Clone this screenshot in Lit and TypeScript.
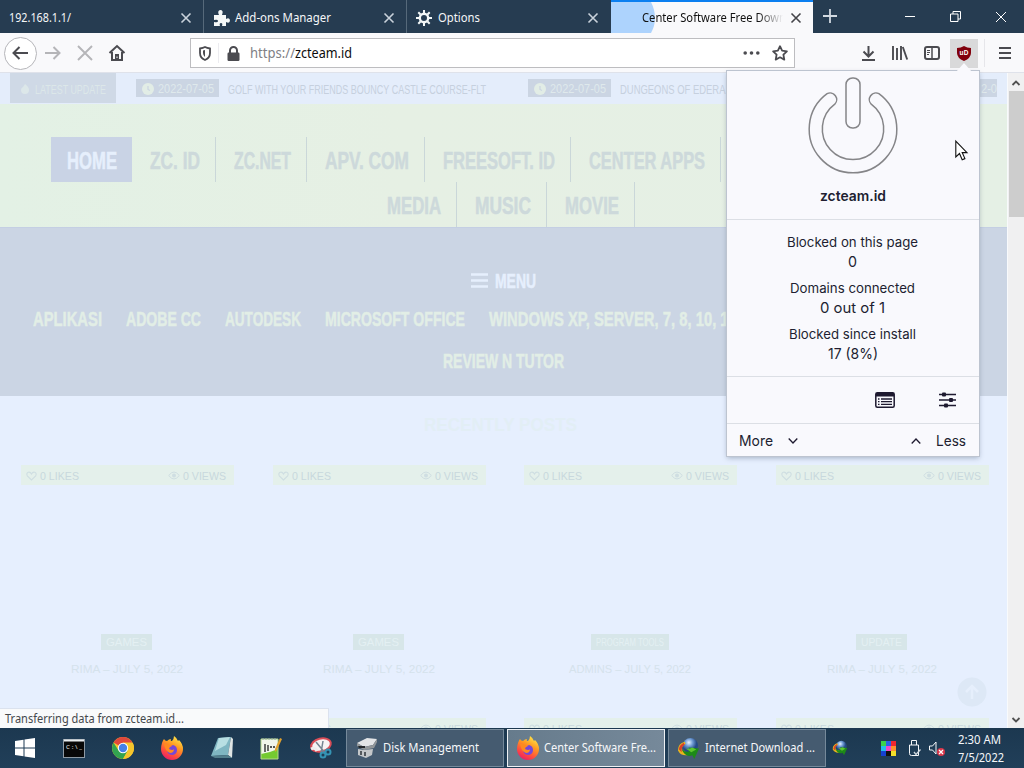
import { LitElement, html, svg, css } from "lit";
import { customElement } from "lit/decorators.js";

// One line of text, fitted to a known width; capitals are centred in the line box.
const t = (s: string, w: number, size: number, cls = "", h = 20) => html`<svg class="t ${cls}" width=${w} height=${h}><text x="0" y=${h / 2 + size * 0.36} font-size=${size} textLength=${w} lengthAdjust="spacingAndGlyphs">${s}</text></svg>`;

const icon = (w: number, h: number, body: unknown, cls = "") => html`<svg class="i ${cls}" width=${w} height=${h} viewBox="0 0 ${w} ${h}">${body}</svg>`;

const closeIcon = (cls = "") => icon(12, 12, svg`<path d="M1.5 1.5l9 9M10.5 1.5l-9 9" fill="none" stroke="currentColor" stroke-width="1.6"/>`, cls);
const clockIcon = icon(12, 12, svg`<circle cx="6" cy="6" r="6" fill="#e2ede6"/><path d="M6 3v3.5l2 1" fill="none" stroke="#cbd5e2" stroke-width="1.2"/>`);
const firefox = icon(24, 24, svg`<defs><linearGradient id="ff" x1=".8" y1="0" x2=".3" y2="1"><stop offset="0" stop-color="#fff04d"/><stop offset=".4" stop-color="#ff9a22"/><stop offset=".75" stop-color="#ff4a3f"/><stop offset="1" stop-color="#e81e68"/></linearGradient></defs><path d="M2 7q1-3 2-4 1 2 3 2 2-2 4-2-1 2 1 2 2-2 2-5 3 2 4 5l1-1q4 4 4 9A11 11 0 0 1 1 13q0-3 1-6z" fill="url(#ff)"/><path d="M7 10q3 1 6-1 4 1 4 5 0 4-4 5-5 0-6-4z" fill="#7548d8"/><path d="M4 8q3-1 5 1l3 1q-3 1-3 3 4 2 5 0 0 4-4 4-5-2-6-9z" fill="#ff8a20"/>`);
const idm = (s: number) => html`<svg class="i" width=${s} height=${s} viewBox="0 0 24 24"><defs><radialGradient id="gl" cx=".4" cy=".3"><stop offset="0" stop-color="#e8f2ff"/><stop offset=".5" stop-color="#6f9bd4"/><stop offset="1" stop-color="#254a86"/></radialGradient></defs><circle cx="14" cy="9" r="8" fill="url(#gl)"/><path d="M8 5q-7 2-7 9 3 6 10 5l1-3q-7 0-7-5 1-3 4-4z" fill="#e8b51c"/><path d="M7 6q-5 3-5 7l3 3q-1-6 3-8z" fill="#d9402a"/><path d="M5 13q5 4 9 1l-2-3 11 1-5 11-2-4q-7 3-11-6z" fill="#1d8a18"/><path d="M9 12q4 1 7-1l4 2-5 3z" fill="#5cc52c"/></svg>`;
const heart = icon(11, 10, svg`<path d="M5.5 9L1.3 4.8Q0 2.3 2.2 1.2 4.4.6 5.5 3 6.6.6 8.8 1.2 11 2.3 9.7 4.8Z" fill="none" stroke="#cfdee2" stroke-width="1.1"/>`);
const eye = icon(12, 9, svg`<path d="M.7 4.5Q6-2.5 11.3 4.5 6 11.5 .7 4.5Z" fill="none" stroke="#cfdee2"/><circle cx="6" cy="4.5" r="2" fill="#cfdee2"/>`);

@customElement("browser-tabs")
class BrowserTabs extends LitElement {
  static styles = css`
    :host { display: flex; height: 33px; background: #263c51; color: #f2f5f8; }
    svg { display: block; flex: none; overflow: visible; }
    text { font-family: "Noto Sans", sans-serif; fill: #f4f6f8; }
    .tab { display: flex; align-items: center; box-sizing: border-box; width: 203.5px; padding: 2px 11px 0 9px; border-right: 1px solid #56697a; }
    .tab .x { margin-left: auto; color: #c9d2db; }
    .lead { margin: 0 5px 0 0; }
    .gear { margin-right: 6px; }
    .plain { border-color: transparent; }
    .active { width: 202.5px; border: 0; border-top: 2px solid #0b7ff0; padding: 0 11px 0 0; background: #f9f9fb; color: #3c3c40; position: relative; }
    .active text { fill: #111; }
    .burst { position: absolute; left: 0; top: 0; }
    .title { margin-left: 31px; width: 141px; overflow: hidden; position: relative; -webkit-mask-image: linear-gradient(90deg, #000 82%, transparent); mask-image: linear-gradient(90deg, #000 82%, transparent); }
    .active .x { color: #444449; }
    .plus { margin: 9px 0 0 10px; }
    .win { display: flex; margin-left: auto; align-items: center; gap: 34px; padding-right: 17px; }
  `;
  render() {
    return html`
      <div class="tab">${t("192.168.1.1/", 62, 12)}${closeIcon("x")}</div>
      <div class="tab">
        ${icon(17, 17, svg`<path d="M1 6h5q-2-4 1-5 4 0 2 5h4v4q3-2 4 1 0 4-4 2v4H9q1-3-1-3t-1 3H1v-4q4 1 4-1T1 11z" fill="#f4f8f8"/>`, "lead")}
        ${t("Add-ons Manager", 96, 12)}${closeIcon("x")}</div>
      <div class="tab plain">
        ${icon(16, 16, svg`<g stroke="#f4f8f8" fill="none"><circle cx="8" cy="8" r="4.200" stroke-width="2.400"/><path d="M8 0v3M8 13v3M0 8h3M13 8h3M2.300 2.300l2.200 2.200M11.500 11.500l2.200 2.200M2.300 13.700l2.200-2.200M11.500 4.500l2.200-2.200" stroke-width="2"/></g>`, "gear")}
        ${t("Options", 42, 12)}${closeIcon("x")}</div>
      <div class="tab active">
        ${icon(44, 31, svg`<path d="M0 0h40q4 8 4 16 0 8-4 15H0z" fill="#add3fd"/>`, "burst")}
        <div class="title">${t("Center Software Free Down", 144, 12)}</div>${closeIcon("x")}</div>
      ${icon(14, 14, svg`<path d="M7 0v14M0 7h14" stroke="#d2d9e0" stroke-width="1.800"/>`, "plus")}
      <div class="win">
        ${icon(12, 12, svg`<path d="M1 5.500h10" stroke="#fff"/>`)}
        ${icon(11, 11, svg`<path d="M.5 3h7.500v7.500H.5zM3 3V.5h7.500V8H8" fill="none" stroke="#fff"/>`)}
        ${icon(12, 12, svg`<path d="M1 1l10 10M11 1L1 11" stroke="#fff"/>`)}
      </div>`;
  }
}

@customElement("nav-toolbar")
class NavToolbar extends LitElement {
  static styles = css`
    :host { display: flex; align-items: center; box-sizing: border-box; height: 40px; background: #f9f9fb; color: #4b4b50; padding: 1px 0 0 3.5px; border-bottom: 1px solid #dfe2ea; }
    svg { display: block; flex: none; overflow: visible; }
    text { font-family: "Noto Sans", sans-serif; fill: #0c0c0d; }
    .grey text { fill: #808085; }
    .cell { width: 32px; height: 33px; display: grid; place-items: center; flex: none; }
    .back { box-sizing: border-box; border: 1px solid #b6b6ba; border-radius: 50%; background: #fff; width: 33px; }
    .dim { color: #b5b5b8; }
    .url { display: flex; align-items: center; box-sizing: border-box; margin: 0 57px 0 57.5px; width: 605px; height: 30px; background: #fff; border: 1px solid #bdbdc0; padding: 0 6px 0 8px; flex: none; }
    .shield { padding-right: 7px; margin-right: 8px; height: 20px; border-right: 1px solid #ececf0; }
    .lock { margin-right: 10px; }
    .dots { margin-left: auto; margin-right: 12px; }
    .ub { width: 28px; height: 29px; margin: 1px 2px 0; background: #d9d9da; }
    .ub text { fill: #fff; font-weight: 700; font-family: "Liberation Sans", sans-serif; }
    .menu { margin-left: 4px; width: 39px; display: flex; align-items: center; }
    .menu svg { margin-left: 14px; }
    .rule { width: 1px; height: 28px; background: #e6e6ea; }
  `;
  render() {
    return html`
      <div class="cell back">${icon(16, 14, svg`<path d="M16 7H1.500M7.500 1l-6 6 6 6" fill="none" stroke="currentColor" stroke-width="2"/>`)}</div>
      <div class="cell dim">${icon(16, 14, svg`<path d="M0 7h14.500M8.500 1l6 6-6 6" fill="none" stroke="currentColor" stroke-width="2"/>`)}</div>
      <div class="cell dim">${icon(14, 14, svg`<path d="M0 0l14 14M14 0L0 14" stroke="currentColor" stroke-width="1.900"/>`)}</div>
      <div class="cell">${icon(16, 16, svg`<path d="M.5 8L8 1l7.500 7M3 7v8h10V7" fill="none" stroke="currentColor" stroke-width="2"/><path d="M6 15V9h4v6z" fill="currentColor"/><path d="M8 11.500v1.500" stroke="#fff"/>`)}</div>
      <div class="url">
        ${icon(12, 15, svg`<path d="M1 2.500Q4 2 6 1q2 1 5 1.500V7q0 5-5 7-5-2-5-7z" fill="none" stroke="currentColor" stroke-width="1.800"/><path d="M6 4v7Q4 9.500 4 7V4.500z" fill="currentColor"/>`)}
        <span class="shield"></span>
        ${icon(13, 15, svg`<path d="M3 7V4.500a3.500 3.500 0 0 1 7 0V7" fill="none" stroke="currentColor" stroke-width="2"/><rect x=".5" y="6.500" width="12" height="8.500" rx="1.200" fill="currentColor"/>`, "lock")}
        ${t("https://", 45, 13.5, "grey")}${t("zcteam.id", 57, 13.5)}
        ${icon(17, 4, svg`<g fill="currentColor"><circle cx="2.200" cy="2" r="1.800"/><circle cx="8.500" cy="2" r="1.800"/><circle cx="14.800" cy="2" r="1.800"/></g>`, "dots")}
        ${icon(16, 16, svg`<path d="M8 1.200l2.100 4.400 4.800.7-3.500 3.400.9 4.900L8 12.300l-4.300 2.300.9-4.900L1.100 6.300l4.800-.7z" fill="none" stroke="currentColor" stroke-width="1.800" stroke-linejoin="round"/>`)}
      </div>
      <div class="cell">${icon(13, 16, svg`<path d="M6.500 1v10M1.500 6.500l5 5 5-5M0 15h13" fill="none" stroke="currentColor" stroke-width="2"/>`)}</div>
      <div class="cell">${icon(16, 14, svg`<path d="M1 0v14M5 2v12M9 0v14M10.800 1l4.400 12.500" fill="none" stroke="currentColor" stroke-width="1.900"/>`)}</div>
      <div class="cell">${icon(16, 14, svg`<rect x="1" y="1" width="14" height="12" rx="2" fill="none" stroke="currentColor" stroke-width="2"/><path d="M8 1v12" stroke="currentColor" stroke-width="1.500"/><path d="M3 4.500h3M3 6.500h3M3 8.500h2" stroke="currentColor"/>`)}</div>
      <div class="cell ub">${icon(14, 15, svg`<path d="M7 0q3 2 7 2v5q0 5-7 8-7-3-7-8V2q4 0 7-2z" fill="#80000c"/><text x="2.500" y="9" font-size="6.500" textLength="9">uD</text>`)}</div>
      <div class="menu"><span class="rule"></span>${icon(12, 12, svg`<path d="M0 1h12M0 6h12M0 11h12" stroke="currentColor" stroke-width="1.900"/>`)}</div>`;
  }
}

@customElement("site-page")
class SitePage extends LitElement {
  static styles = css`
    :host { display: block; flex: 1; min-width: 0; height: 655px; overflow: hidden; background: #e6effe; position: relative; }
    svg { display: block; flex: none; overflow: visible; }
    text { font-family: "Liberation Sans", sans-serif; font-weight: 700; }
    .thin text, .light text, .date text, .tag text { font-weight: 400; }
    .ticker { display: flex; height: 31px; background: #e4edfb; padding-left: 10px; align-items: center; }
    .latest { display: flex; box-sizing: border-box; width: 106px; height: 30px; padding: 2px 0 0 10px; gap: 5px; align-items: center; background: #cfd9e6; margin: -1px 20px 0 0; flex: none; }
    .latest text { fill: #dce7e9; font-weight: 400; }
    .stamp { display: flex; box-sizing: border-box; width: 83px; height: 18px; padding: 1px 0 0 6px; gap: 4px; align-items: center; background: #cbd5e3; margin: -1px 9px 0 0; flex: none; }
    .stamp text { fill: #dfe9ec; font-weight: 400; }
    .thin { margin-right: 42px; }
    .thin text { fill: #c6d0de; }
    .last { width: 17px; margin-left: 201px; overflow: hidden; padding-left: 1px; }
    .nav { background: linear-gradient(90deg, #e3f1e5, #e6f0e4 40%, #e5f0e5); height: 123px; box-sizing: border-box; padding-top: 33px; }
    .nav text { stroke-width: 0.500; stroke: #cdd9db; }
    .row { display: flex; height: 45px; padding-left: 51px; }
    .second { padding-left: 369px; }
    .link { display: flex; align-items: center; padding: 2px 15px 0 18px; border-right: 1px solid #cad7d9; }
    .link text { fill: #cdd9db; }
    .home { background: #c9d3e5; padding: 2px 15px 0 16px; border: 0; }
    .home text { fill: #e6effc; stroke: #e6effc; }
    .menu { height: 169px; background: #cbd5e4; box-sizing: border-box; padding-top: 42px; border-top: 1px solid #c4cfe3; }
    .menu text { stroke-width: 0.500; stroke: #e2eee6; }
    .toggle { display: flex; align-items: center; gap: 7px; padding-left: 471px; height: 21px; }
    .toggle text { fill: #e6effd; stroke: #e6effd; }
    .cats { display: flex; gap: 24px; padding-left: 33px; height: 42px; align-items: center; margin-top: 6.5px; }
    .cats text, .review text { fill: #e2eee6; }
    .review { padding-left: 443px; height: 42px; display: flex; align-items: center; }
    .heading { height: 68.5px; box-sizing: border-box; padding: 19px 0 0 424px; }
    .heading text { fill: #e2eef5; }
    .grid { display: grid; grid-template-columns: repeat(4, 251.7px); padding-left: 21px; }
    .card { height: 253px; }
    .bar { display: flex; align-items: center; width: 213px; height: 20px; box-sizing: border-box; background: #e4f0eb; padding: 2px 8px 0 5px; gap: 3px; }
    .bar .push { margin-left: auto; }
    .light text { fill: #c8d8dd; }
    .tagline { display: flex; justify-content: center; width: 211px; margin-top: 149px; }
    .tag { height: 16px; background: #d7e6e9; display: grid; place-items: center; padding: 0 5px; }
    .tag text { fill: #e4f0f3; }
    .date { display: flex; justify-content: center; width: 212px; margin-top: 10px; }
    .date text { fill: #d5e2ec; }
    .top { position: absolute; left: 957px; top: 604px; }
  `;
  render() {
    const card = (tag: string, tw: number, date: string, dw: number) => html`<div class="card">
      <div class="bar">${heart}${t("0 LIKES", 39, 11, "light", 14)}<span class="push"></span>${eye}${t("0 VIEWS", 43, 11, "light", 14)}</div>
      <div class="tagline"><div class="tag">${t(tag, tw, 11, "", 14)}</div></div>
      <div class="date">${t(date, dw, 11, "", 18)}</div></div>`;
    const link = (s: string, w: number) => html`<div class="link">${t(s, w, 23)}</div>`;
    const cards = [["GAMES", 41, "RIMA – JULY 5, 2022", 112], ["GAMES", 41, "RIMA – JULY 5, 2022", 112], ["PROGRAM TOOLS", 68, "ADMINS – JULY 5, 2022", 122], ["UPDATE", 41, "RIMA – JULY 5, 2022", 110]] as [string, number, string, number][];
    return html`
      <div class="ticker">
        <div class="latest">${icon(10, 12, svg`<path d="M5 1q4 3 4 6 0 4-4 4T1 7q0-2 2-3z" fill="#dce7e9"/>`)}${t("LATEST UPDATE", 71, 13.5)}</div>
        <div class="stamp">${clockIcon}${t("2022-07-05", 56, 12)}</div>
        ${t("GOLF WITH YOUR FRIENDS BOUNCY CASTLE COURSE-FLT", 258, 13.5, "thin")}
        <div class="stamp">${clockIcon}${t("2022-07-05", 56, 12)}</div>
        ${t("DUNGEONS OF EDERA (V", 117, 13.5, "thin")}
        <div class="stamp last">${t("2-0", 16, 12)}</div>
      </div>
      <div class="nav">
        <div class="row"><div class="link home">${t("HOME", 50, 23)}</div>${link("ZC. ID", 50)}${link("ZC.NET", 57)}${link("APV. COM", 84)}${link("FREESOFT. ID", 112)}${link("CENTER APPS", 116)}</div>
        <div class="row second">${link("MEDIA", 54)}${link("MUSIC", 56)}${link("MOVIE", 54)}</div>
      </div>
      <div class="menu">
        <div class="toggle">${icon(17, 15, svg`<path d="M0 1.500h17M0 7.500h17M0 13.500h17" stroke="#e6effd" stroke-width="2.500"/>`)}${t("MENU", 41, 20.5)}</div>
        <div class="cats">${t("APLIKASI", 69, 20.5)}${t("ADOBE CC", 75, 20.5)}${t("AUTODESK", 76, 20.5)}${t("MICROSOFT OFFICE", 140, 20.5)}${t("WINDOWS XP, SERVER, 7, 8, 10, 11", 247, 20.5)}</div>
        <div class="review">${t("REVIEW N TUTOR", 121, 20.5)}</div>
      </div>
      <div class="heading">${t("RECENTLY POSTS", 153, 18)}</div>
      <div class="grid">${cards.map((c) => card(...c))}${cards.map((c) => card(...c))}</div>
      ${icon(30, 30, svg`<circle cx="15" cy="15" r="14.500" fill="#dde8f6"/><path d="M15 22V9M9 15l6-6 6 6" fill="none" stroke="#e6effc" stroke-width="2.500"/>`, "top")}`;
  }
}

@customElement("blocker-popup")
class BlockerPopup extends LitElement {
  static styles = css`
    :host { display: block; box-sizing: border-box; width: 252px; height: 385px; background: #f9f9fd; box-shadow: 0 0 0 1px #bdc4d0, 0 2px 5px rgba(40, 60, 90, 0.35); color: #1e1a30; }
    svg { display: block; flex: none; overflow: visible; }
    text { font-family: Inter, sans-serif; fill: #211e31; }
    .head { height: 148px; display: flex; flex-direction: column; align-items: center; box-sizing: border-box; padding-top: 6px; gap: 12px; }
    .bold text { font-weight: 600; }
    .stats { height: 157px; box-sizing: border-box; border-top: 1px solid #dcdfe5; padding: 13px 1px 0 0; display: flex; flex-direction: column; align-items: center; }
    .value { margin-bottom: 8px; }
    .tools { height: 47px; box-sizing: border-box; border-top: 1px solid #dcdfe5; display: flex; align-items: center; justify-content: flex-end; gap: 44px; padding-right: 23.5px; }
    .foot { height: 33px; box-sizing: border-box; border-top: 1px solid #dcdfe5; display: flex; align-items: center; padding: 1px 13px 0 12px; gap: 15px; }
    .up { margin-left: auto; }
  `;
  render() {
    const stat = (a: string, aw: number, b: string, bw: number) => html`${t(a, aw, 13, "", 19)}${t(b, bw, 14.5, "value", 19)}`;
    return html`
      <div class="head">
        <svg width="90" height="97" viewBox="-45 -52 90 97"><g fill="none" stroke="#858588" stroke-width="1.500"><path d="M-25.900-35.300A43.800 43.800 0 1 0 25.900-35.300A6.600 6.600 0 0 0 18.200-24.800A30.700 30.700 0 1 1-18.200-24.800A6.600 6.600 0 0 0-25.900-35.300Z"/><rect x="-7" y="-51" width="14" height="50" rx="6.500"/></g></svg>
        ${t("zcteam.id", 66, 14, "bold")}
      </div>
      <div class="stats">${stat("Blocked on this page", 131, "0", 9)}${stat("Domains connected", 125, "0 out of 1", 65)}${stat("Blocked since install", 127, "17 (8%)", 50)}</div>
      <div class="tools">
        ${icon(20, 16, svg`<rect x=".8" y=".8" width="18.400" height="14.400" rx="1.500" fill="none" stroke="currentColor" stroke-width="1.500"/><path d="M1 1h18v3.500H1z" fill="currentColor"/><path d="M3 7h1.500M3 9.700h1.500M3 12.400h1.500M6 7h11M6 9.700h11M6 12.400h11" stroke="currentColor" stroke-width="1.300"/>`)}
        ${icon(17, 16, svg`<path d="M0 2.500h17M0 8h17M0 13.500h17" stroke="currentColor" stroke-width="1.300"/><rect x="3" y=".5" width="4" height="4" rx="1" fill="currentColor"/><rect x="10" y="6" width="4" height="4" rx="1" fill="currentColor"/><rect x="5" y="11.500" width="4" height="4" rx="1" fill="currentColor"/>`)}
      </div>
      <div class="foot">${t("More", 34, 14.5)}${icon(10, 6, svg`<path d="M.7.500L5 5 9.300.500" fill="none" stroke="currentColor" stroke-width="1.300"/>`)}${icon(10, 6, svg`<path d="M.7 5.500L5 1l4.300 4.500" fill="none" stroke="currentColor" stroke-width="1.300"/>`, "up")}${t("Less", 30, 14.5)}</div>`;
  }
}

@customElement("task-bar")
class TaskBar extends LitElement {
  static styles = css`
    :host { display: flex; height: 40px; background: linear-gradient(#1c3850, #213f59); }
    svg { display: block; flex: none; overflow: visible; }
    text { font-family: "Noto Sans", sans-serif; fill: #f5f7f9; }
    .pins { display: flex; width: 346px; }
    .pin { width: 49.2px; display: grid; place-items: center; }
    .apps { display: flex; gap: 3px; padding-top: 1px; }
    .app { display: flex; align-items: center; gap: 5px; box-sizing: border-box; width: 158px; height: 38px; padding-left: 8px; background: #455b70; border: 1px solid #75899a; }
    .on { background: linear-gradient(90deg, #667b8c, #76899a); border-color: #eef1f4; gap: 4px; }
    .tray { display: flex; align-items: center; margin-left: 6px; }
    .swatch { margin: 0 12px 0 33px; }
    .usb { margin-right: 8px; }
    .clock { display: flex; flex-direction: column; margin: 1px 0 0 13px; }
  `;
  render() {
    return html`
      <div class="pins">
        <div class="pin">${icon(20, 20, svg`<path d="M0 3l8.500-1.200V9.500H0zM9.500 1.600L20 0v9.500H9.500zM0 10.500h8.500v7.700L0 17zM9.500 10.500H20V20L9.500 18.500z" fill="#fff"/>`)}</div>
        <div class="pin">${icon(22, 19, svg`<rect x=".5" y=".5" width="21" height="18" fill="#080808" stroke="#8e9aa4"/><path d="M1 1.500h20" stroke="#e8ecef" stroke-width="2"/><text x="3" y="9.500" font-size="6" textLength="16">C:\\_</text>`)}</div>
        <div class="pin">${icon(22, 22, svg`<circle cx="11" cy="11" r="11" fill="#f5c52c"/><path d="M11 11L1.500 5.500A11 11 0 0 1 20.500 5.500H11z" fill="#e0483c"/><path d="M1.500 5.500A11 11 0 0 0 11 22l5-8.500H6.500z" fill="#32a350"/><path d="M11 6h9.800a11 11 0 0 1-9.800 16l4.800-8.500z" fill="#f5c52c"/><circle cx="11" cy="11" r="5.200" fill="#fff"/><circle cx="11" cy="11" r="4.200" fill="#4480e8"/>`)}</div>
        <div class="pin">${firefox}</div>
        <div class="pin">${icon(23, 22, svg`<path d="M8 1l13-1-3 18-17 1z" fill="#7fb6c2"/><path d="M9 1l11-1-4 8-11 6z" fill="#b8dfe3"/><path d="M21 0l2 2-1 19-4-3z" fill="#dfe5e4"/><path d="M1 19l17-1 4 3H5z" fill="#527e8c"/>`)}</div>
        <div class="pin">${icon(22, 23, svg`<path d="M1 2h17v20H1z" fill="#f1f5ea"/><path d="M1 17q8-1 17-5v10H1z" fill="#74ca30"/><path d="M1 2h17v20H1z" fill="none" stroke="#b5d98a"/><path d="M3 1v2M6 1v2M9 1v2M12 1v2M15 1v2" stroke="#9aa"/><path d="M5 7v8M8 8v6M10 10h2M13 10h2" stroke="#222" stroke-width="1.300"/><path d="M20 1l2 1-5 11-2 2V12z" fill="#e1a02d"/>`)}</div>
        <div class="pin">${icon(24, 22, svg`<ellipse cx="13" cy="8" rx="10" ry="6.500" transform="rotate(-14 13 8)" fill="#f6f3f4" stroke="#db4d57" stroke-width="2"/><path d="M8 5l10 12M15 4l-2 12" stroke="#758592" stroke-width="1.500"/><path d="M3 12q4-2 6 2" fill="none" stroke="#eee" stroke-width="3"/><circle cx="15" cy="18" r="2.500" fill="none" stroke="#3594b4" stroke-width="2"/><circle cx="20" cy="15" r="2.500" fill="none" stroke="#3594b4" stroke-width="2"/>`)}</div>
      </div>
      <div class="apps">
        <div class="app">${icon(23, 22, svg`<path d="M2 6l10-5 10 1-4 6-9 2z" fill="#e3e5e7"/><path d="M2 6l7 4 9-2 4-6v3l-3 6-10 2-7-4z" fill="#92979a"/><path d="M3 12l6 1 9-1-1 6-6 3-8-3z" fill="#c4c7c9"/><path d="M3 9h7v2H4z" fill="#24282b"/><path d="M6 14v4M10 15v4" stroke="#54595d" stroke-width="2"/>`)}${t("Disk Management", 96, 12)}</div>
        <div class="app on">${firefox}${t("Center Software Fre...", 112, 12)}</div>
        <div class="app">${idm(23)}${t("Internet Download ...", 110, 12)}</div>
      </div>
      <div class="tray">
        ${idm(16)}
        ${icon(15, 15, svg`<path d="M0 0h5v5H0z" fill="#3bd24c"/><path d="M5 0h5v5H5z" fill="#2862e8"/><path d="M10 0h5v5h-5z" fill="#f02730"/><path d="M0 5h5v5H0z" fill="#20bdf0"/><path d="M5 5h5v5H5z" fill="#f046ca"/><path d="M10 5h5v5h-5z" fill="#ff922d"/><path d="M0 10h5v5H0z" fill="#1541d2"/><path d="M5 10h5v5H5z" fill="#111"/><path d="M10 10h5v5h-5z" fill="#f4df2a"/>`, "swatch")}
        ${icon(13, 16, svg`<path d="M3.500 5V.500h5V5M1.500 5h9v10.500h-7q-2 0-2-2zM5 2.500h.1M7 2.500h.1" fill="none" stroke="#f4f6f8"/><path d="M6 12l2 2.500 4.500-5" fill="none" stroke="#cfd8df" stroke-width="1.300"/>`, "usb")}
        ${icon(16, 15, svg`<path d="M.5 5h3l3.500-4v12l-3.500-4h-3z" fill="none" stroke="#f4f6f8"/><circle cx="12" cy="11" r="4" fill="#d9364a"/><path d="M10 9l4 4M14 9l-4 4" stroke="#fff" stroke-width="1.200"/>`)}
        <div class="clock">${t("2:30 AM", 43, 12, "", 18)}${t("7/5/2022", 46, 12, "", 18)}</div>
      </div>`;
  }
}

@customElement("app-root")
class AppRoot extends LitElement {
  static styles = css`
    :host { display: block; width: 1024px; height: 768px; overflow: hidden; position: relative; }
    svg { display: block; overflow: visible; }
    text { font-family: "Noto Sans", sans-serif; fill: #45484c; }
    .view { display: flex; height: 655px; }
    .scroll { width: 16px; border-left: 1px solid #f8fafc; background: #f0f0f1; display: flex; flex-direction: column; align-items: center; color: #505050; box-sizing: content-box; }
    .up { margin: 7px 0 5px; }
    .thumb { width: 15px; height: 126px; background: #cdcdcd; }
    .down { margin: auto 0 5px; }
    .status { position: absolute; left: 0; top: 708px; width: 329px; height: 20px; box-sizing: border-box; background: #f9fafb; border: 1px solid #dbe2ee; border-width: 1px 1px 0 0; padding-left: 4.5px; }
    .popup { position: absolute; left: 727px; top: 71px; }
    .arrow { position: absolute; left: 956px; top: 63px; }
    .cursor { position: absolute; left: 955px; top: 140px; }
  `;
  render() {
    return html`
      <browser-tabs></browser-tabs>
      <nav-toolbar></nav-toolbar>
      <div class="view">
        <site-page></site-page>
        <div class="scroll">
          ${icon(8, 6, svg`<path d="M.5 5L4 1.500 7.500 5" fill="none" stroke="currentColor" stroke-width="1.800"/>`, "up")}
          <div class="thumb"></div>
          ${icon(8, 6, svg`<path d="M.5 1L4 4.500 7.500 1" fill="none" stroke="currentColor" stroke-width="1.800"/>`, "down")}
        </div>
      </div>
      <task-bar></task-bar>
      <div class="status">${t("Transferring data from zcteam.id...", 179, 12)}</div>
      <blocker-popup class="popup"></blocker-popup>
      ${icon(16, 9, svg`<path d="M0 9L8 0l8 9z" fill="#f9f9fd"/>`, "arrow")}
      ${icon(13, 21, svg`<path d="M.8 1v16l3.700-3.500 2.700 6.300 2.700-1.200-2.700-6H12z" fill="#fff" stroke="#111" stroke-width="1.100"/>`, "cursor")}`;
  }
}
